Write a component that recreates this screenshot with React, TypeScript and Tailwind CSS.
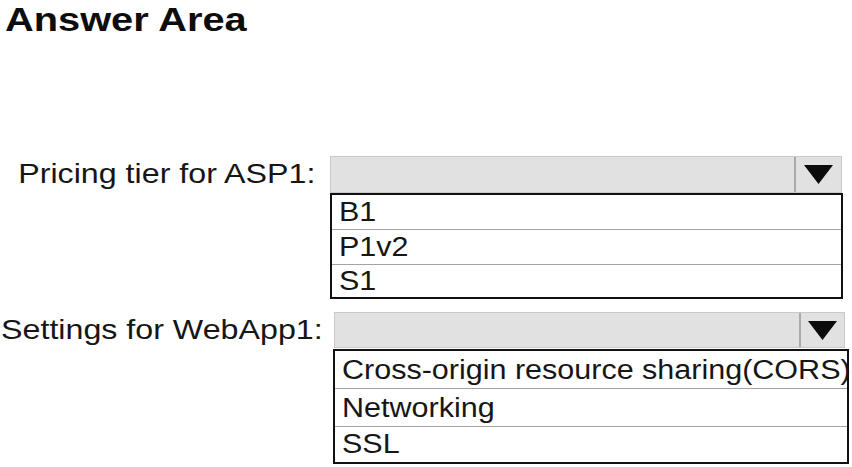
import type { ReactNode } from "react";

// the reference is horizontally stretched, so text is widened to match
function Wide({ children, right = false, k = "label" }: { children: ReactNode; right?: boolean; k?: "label" | "title" | "option" }) {
  const scale =
    k === "title" ? "scale-x-[1.17]" : k === "option" ? "scale-x-[1.13]" : "scale-x-[1.15]";
  return (
    <span className={`inline-block whitespace-nowrap ${right ? "origin-right" : "origin-left"} ${scale}`}>
      {children}
    </span>
  );
}

function Dropdown({ width, height, dividerW }: { width: string; height: string; dividerW: string }) {
  return (
    <div className={`flex justify-end border border-[#c9c9c9] bg-[#e1e1e1] ${width} ${height}`}>
      <div className={`flex items-center justify-center border-l-2 border-[#a9a9a9] ${dividerW}`}>
        <svg width="29" height="19" viewBox="0 0 29 19">
          <polygon points="0,0 29,0 14.5,19" fill="#0b0b0b" />
        </svg>
      </div>
    </div>
  );
}

function OptionList({ items, width, heights }: { items: string[]; width: string; heights: string[] }) {
  return (
    <div className={`border-2 border-[#111] bg-white ${width}`}>
      {items.map((item, i) => (
        <div
          key={item}
          className={`pl-[7px] text-[27px] text-[#161616] ${heights[i]} ${
            i < items.length - 1 ? "border-b border-[#a3a3a3]" : ""
          }`}
        >
          <Wide k="option">{item}</Wide>
        </div>
      ))}
    </div>
  );
}

export default function App() {
  return (
    <div className="h-[467px] w-[852px] overflow-hidden bg-white font-['Liberation_Sans',Arial,sans-serif]">
      <h1 className="pl-[5px] text-[34px] font-bold leading-[38px] text-[#0d0d0d]">
        <Wide k="title">Answer Area</Wide>
      </h1>

      <div className="mt-[118px] flex">
        <div className="w-[330px] pr-[15px] text-right text-[28px] leading-[36px] text-[#161616]">
          <Wide right>Pricing tier for ASP1:</Wide>
        </div>
        <div className="flex flex-col">
          <Dropdown width="w-[512px]" height="h-[37px]" dividerW="w-[47px]" />
          <OptionList
            items={["B1", "P1v2", "S1"]}
            width="w-[513px]"
            heights={["h-[35px] leading-[35px]", "h-[35px] leading-[35px]", "h-[32px] leading-[32px]"]}
          />
        </div>
      </div>

      <div className="mt-[13px] flex">
        <div className="w-[334px] pr-[11px] text-right text-[28px] leading-[35px] text-[#161616]">
          <Wide right>Settings for WebApp1:</Wide>
        </div>
        <div className="flex flex-col">
          <Dropdown width="w-[511px]" height="h-[36px]" dividerW="w-[45px]" />
          <div className="-ml-px mt-px">
            <OptionList
              items={["Cross-origin resource sharing(CORS)", "Networking", "SSL"]}
              width="w-[516px]"
              heights={["h-[38px] leading-[38px]", "h-[38px] leading-[38px]", "h-[35px] leading-[35px]"]}
            />
          </div>
        </div>
      </div>
    </div>
  );
}
